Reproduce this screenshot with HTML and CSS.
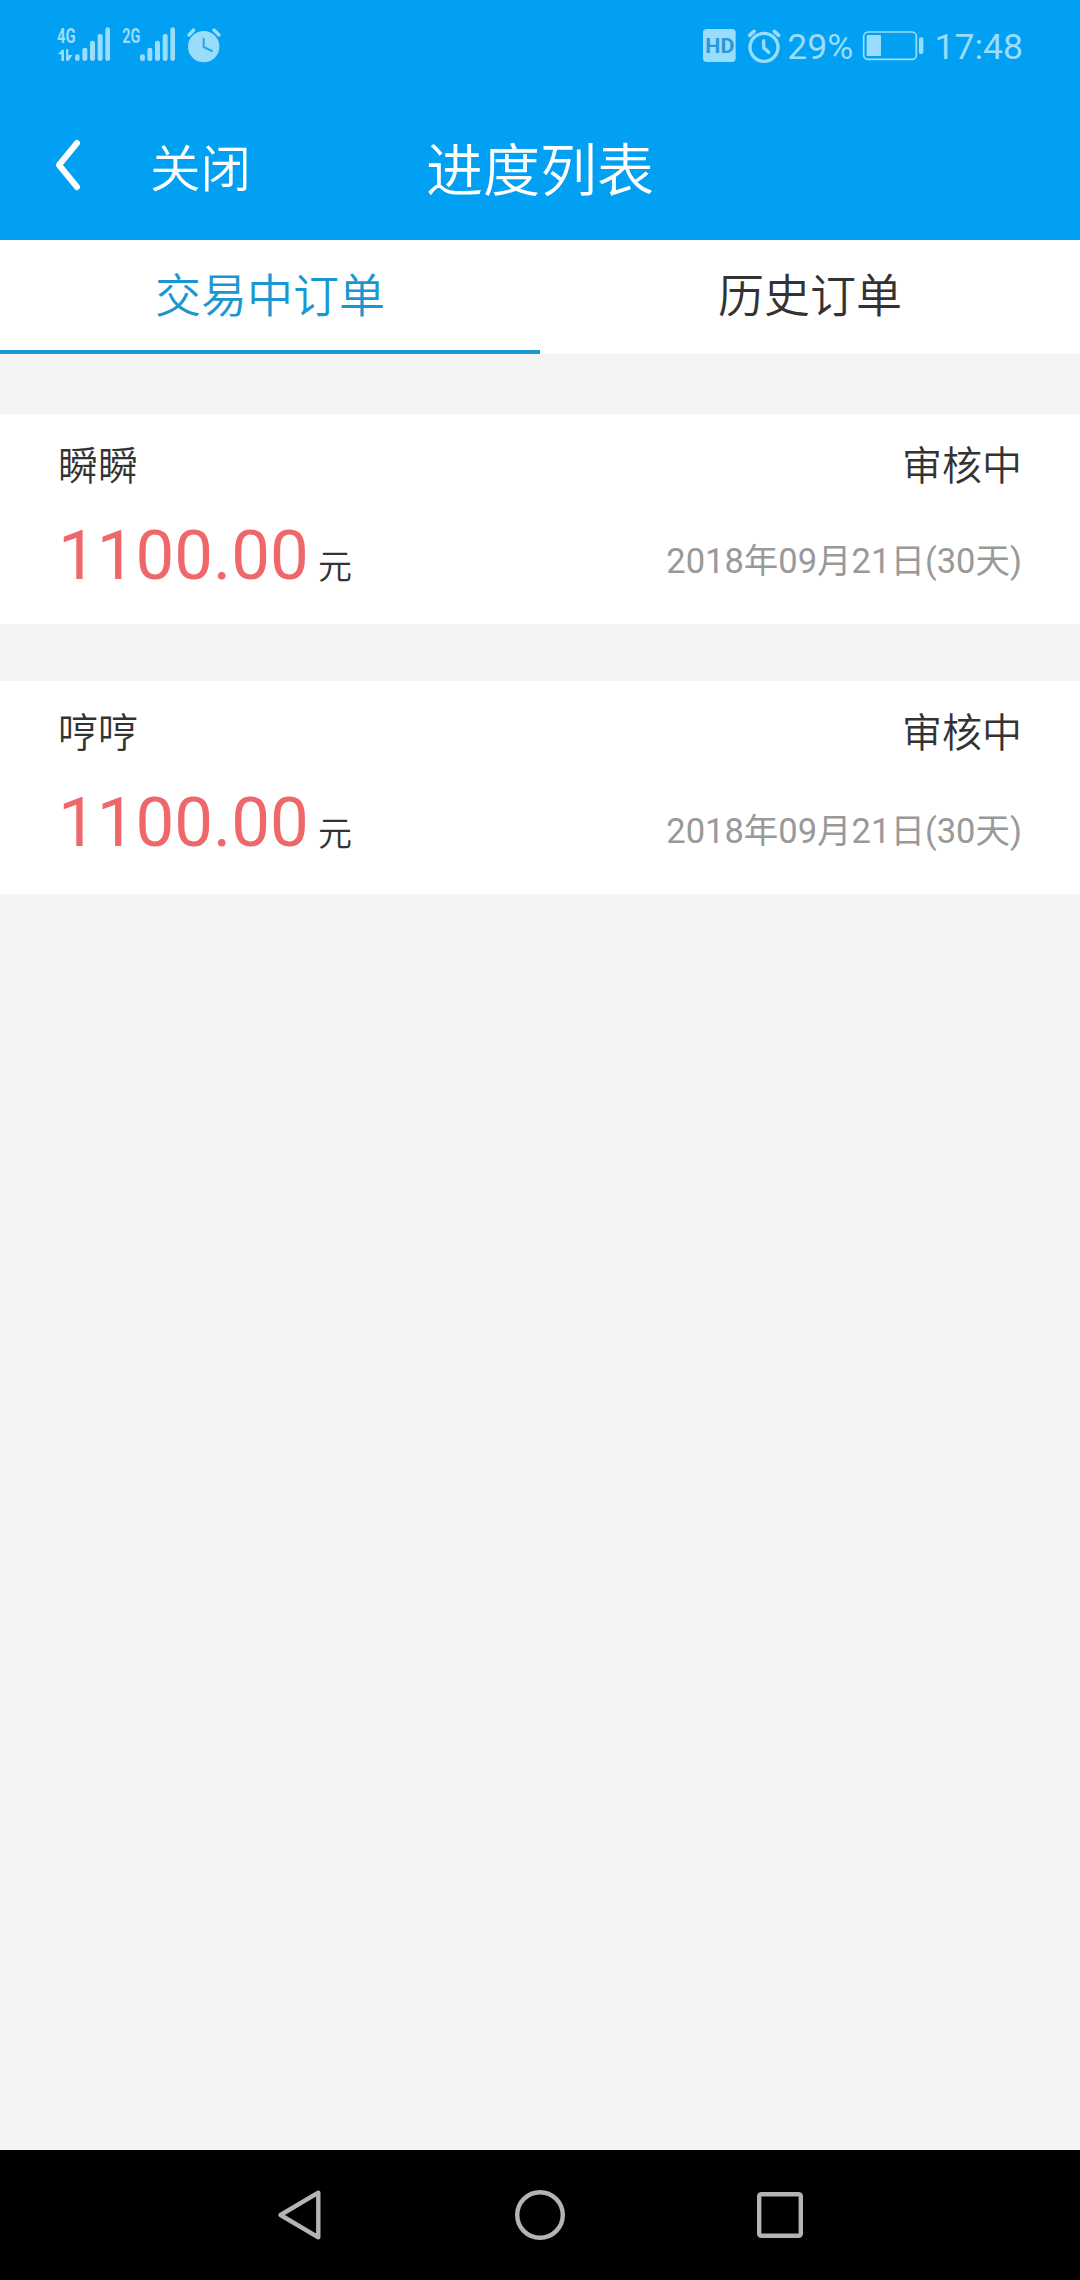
FILE: index.html
```html
<!DOCTYPE html>
<html lang="zh-CN">
<head>
<meta charset="utf-8">
<title>进度列表</title>
<link rel="stylesheet" href="styles.css">
</head>
<body>
<div class="screen">
  <header class="header">
    <div class="status">
      <div class="status-left">
        <svg class="signal" viewBox="51 30 162 150">
          <text class="net" x="51" y="98" textLength="56" lengthAdjust="spacingAndGlyphs">4G</text>
          <path d="M53 133L66 119H72V153H64V133ZM78 118H85V136L98 134L86 152H78Z"/>
          <rect x="105" y="133" width="14" height="20" rx="7"/>
          <rect x="127" y="113" width="15" height="40" rx="7"/>
          <rect x="150" y="92" width="15" height="61" rx="7"/>
          <rect x="173" y="72" width="15" height="81" rx="7"/>
          <rect x="196" y="52" width="14" height="101" rx="7"/>
        </svg>
        <svg class="signal" viewBox="246 30 162 150">
          <text class="net" x="247" y="98" textLength="54" lengthAdjust="spacingAndGlyphs">2G</text>
          <rect x="300" y="133" width="15" height="20" rx="7"/>
          <rect x="322" y="113" width="15" height="40" rx="7"/>
          <rect x="345" y="92" width="15" height="61" rx="7"/>
          <rect x="368" y="72" width="15" height="81" rx="7"/>
          <rect x="391" y="52" width="14" height="101" rx="7"/>
        </svg>
        <svg class="alarm" viewBox="440 51 108 108">
          <circle cx="490" cy="110" r="47"/>
          <path class="line" d="M446 75L460 60M521 60L536 75" stroke-width="10"/>
          <path class="hands" d="M490 86V111L515 123"/>
        </svg>
      </div>
      <div class="status-right">
        <svg class="hd" viewBox="36 51 105 108">
          <rect x="39" y="57" width="98" height="99" rx="11"/>
          <text class="hd-label" x="46" y="128" textLength="87" lengthAdjust="spacingAndGlyphs">HD</text>
        </svg>
        <svg class="alarm" viewBox="169 51 108 108">
          <circle class="line" cx="223" cy="112" r="42" stroke-width="10"/>
          <path class="line" d="M180 76L193 64M254 64L267 76" stroke-width="11"/>
          <path class="line" d="M222 92V113L237 127" stroke-width="10"/>
        </svg>
        <span class="status-text percent">29%</span>
        <svg class="battery" viewBox="516 51 189 108">
          <rect class="line" x="521" y="66" width="158" height="82" rx="13" stroke-width="5"/>
          <rect x="530" y="75" width="43" height="63" rx="3"/>
          <rect x="687" y="82" width="13" height="50" rx="5"/>
        </svg>
        <span class="status-text clock">17:48</span>
      </div>
    </div>
    <div class="navbar">
      <div class="nav-left">
        <svg class="back" viewBox="0 0 28 54"><path d="M23 5L5 27L23 49"/></svg>
        <span class="close">关闭</span>
      </div>
      <h1 class="title">进度列表</h1>
      <div></div>
    </div>
  </header>
  <nav class="tabs">
    <div class="tab active">交易中订单</div>
    <div class="tab">历史订单</div>
  </nav>
  <main class="list">
    <section class="card">
      <div class="row"><span>瞬瞬</span><span>审核中</span></div>
      <div class="detail">
        <div class="amount">1100.00<span class="unit">元</span></div>
        <div class="date">2018年09月21日(30天)</div>
      </div>
    </section>
    <section class="card tall">
      <div class="row"><span>哼哼</span><span>审核中</span></div>
      <div class="detail">
        <div class="amount">1100.00<span class="unit">元</span></div>
        <div class="date">2018年09月21日(30天)</div>
      </div>
    </section>
  </main>
  <footer class="sysnav">
    <svg viewBox="0 0 60 60"><path d="M10.5 30L48.3 7.7V52.3Z"/></svg>
    <svg viewBox="0 0 60 60"><circle cx="30" cy="30" r="22.8"/></svg>
    <svg viewBox="0 0 60 60"><rect x="9.2" y="9.2" width="41.6" height="41.6" rx="2"/></svg>
  </footer>
</div>
</body>
</html>
```
FILE: styles.css
```css
* { box-sizing: border-box; }

body {
  margin: 0;
  font-family: "Noto Sans CJK SC", sans-serif;
  font-weight: 350;
  color: #333;
}

.screen {
  width: 1080px;
  height: 2280px;
  display: flex;
  flex-direction: column;
  background: #f4f4f4;
}

.header {
  height: 240px;
  background: #01a0f2;
}

.status {
  height: 90px;
  padding: 0 57px 0 57px;
  display: flex;
  justify-content: space-between;
  align-items: center;
  color: #99dcfb;
}

.status svg { height: 36px; fill: #99dcfb; flex: none; }
.status .line { fill: none; stroke: #99dcfb; stroke-linecap: round; stroke-linejoin: round; }
.status .hands { fill: none; stroke: #2aa5e4; stroke-width: 6; stroke-linecap: round; }
.status-left, .status-right { display: flex; align-items: center; }
.status .signal { width: 54px; height: 50px; margin-right: 11px; }
.alarm { width: 36px; }
.hd { width: 35px; margin-right: 9px; }
.battery { width: 63px; margin: 0 9px 0 9px; }
.net { font: 700 60px Roboto, sans-serif; }
.status .hd-label { font: 700 58px Roboto, sans-serif; fill: #2699dc; }

.status-text {
  padding-top: 3px;
  font: 400 35.6px/44px Roboto, sans-serif;
}
.percent { margin-left: 5px; }

.navbar {
  height: 150px;
  padding: 0 54px;
  display: grid;
  grid-template-columns: 1fr auto 1fr;
  align-items: center;
  color: #fff;
}

.nav-left { display: flex; align-items: center; }
.back {
  width: 28px;
  height: 54px;
  fill: none;
  stroke: #fff;
  stroke-width: 6;
  stroke-linecap: round;
  stroke-linejoin: round;
}
.close { margin-left: 68px; font-size: 50.5px; line-height: 70px; }
.title { margin: 0; padding-top: 1px; font-size: 57px; line-height: 80px; font-weight: 350; }

.tabs {
  height: 114px;
  display: flex;
  background: #fff;
}
.tab {
  flex: 1;
  padding-top: 2px;
  border-bottom: 4px solid transparent;
  font-size: 46px;
  line-height: 100px;
  text-align: center;
}
.tab.active { color: #1a97d0; border-bottom-color: #1a97d0; }

.list {
  flex: 1;
  padding-top: 60px;
  display: flex;
  flex-direction: column;
  gap: 57px;
}

.card {
  height: 210px;
  padding: 21px 58px 0;
  display: flex;
  flex-direction: column;
  background: #fff;
}
.card.tall { height: 213px; }

.row {
  display: flex;
  justify-content: space-between;
  font-size: 40px;
  line-height: 57px;
}

.detail {
  flex: 1;
  display: flex;
  justify-content: space-between;
}
.amount {
  margin-top: 14px;
  font: 400 69px/100px Roboto, sans-serif;
  color: #ee686a;
}
.unit {
  margin-left: 9px;
  font: 350 34px/40px "Noto Sans CJK SC", sans-serif;
  color: #333;
}
.date {
  align-self: flex-end;
  margin-bottom: 38px;
  font: 400 34.5px/50px Roboto, "Noto Sans CJK SC", sans-serif;
  color: #999;
}

.sysnav {
  height: 130px;
  display: flex;
  justify-content: center;
  align-items: center;
  gap: 180px;
  background: #000;
}
.sysnav svg {
  width: 60px;
  height: 60px;
  fill: none;
  stroke: #b4b4b4;
  stroke-width: 4.4;
  stroke-linejoin: round;
}
```
